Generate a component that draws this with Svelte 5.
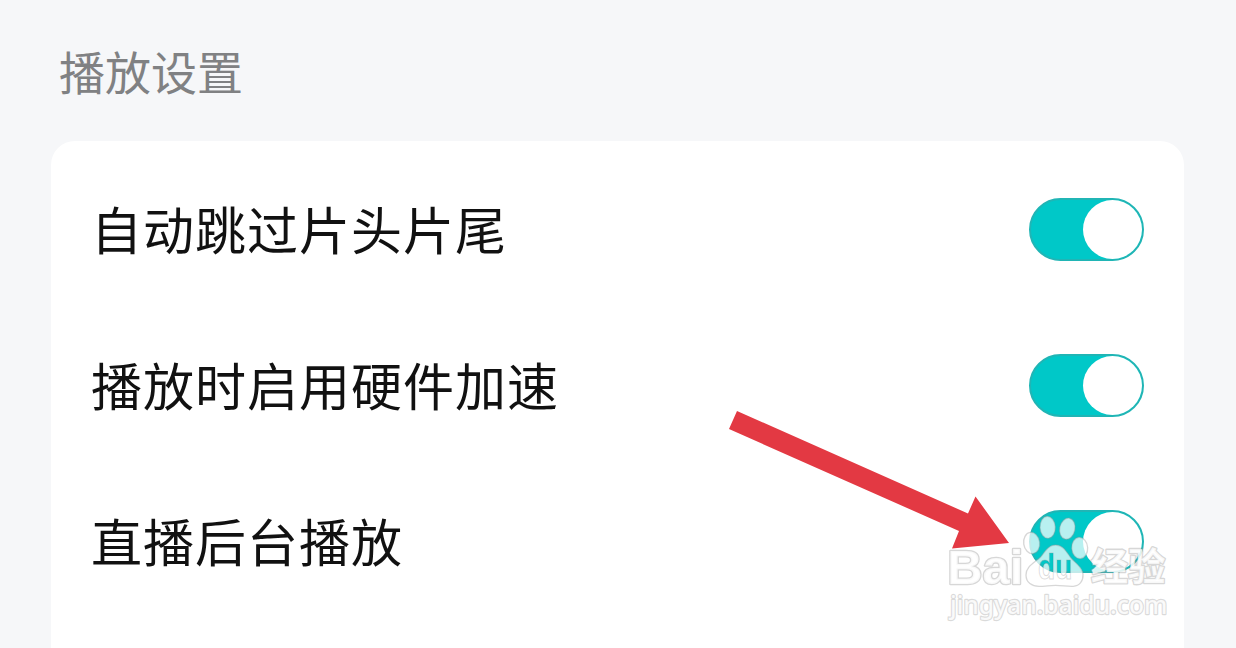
<script>
  let settings = $state([
    { id: "skip", label: "自动跳过片头片尾", on: true },
    { id: "hardware", label: "播放时启用硬件加速", on: true },
    { id: "background", label: "直播后台播放", on: true }
  ]);

  function toggle(setting) {
    setting.on = !setting.on;
  }
</script>

<main>
  <h2>播放设置</h2>
  <div class="card">
    {#each settings as setting (setting.id)}
      <div class="row">
        <span class="label">{setting.label}</span>
        <button
          class="switch"
          class:on={setting.on}
          role="switch"
          aria-checked={setting.on}
          aria-label={setting.label}
          onclick={() => toggle(setting)}
        >
          <span class="thumb"></span>
        </button>
      </div>
    {/each}
  </div>

  <svg class="arrow" viewBox="0 0 290 150" aria-hidden="true">
    <path d="M17 11 L248 113.5 L255.5 96.5 L289 143 L232 148.5 L239 131 L9 29 Z" />
  </svg>

  <svg class="watermark" viewBox="0 0 810 474">
    <defs>
      <mask id="cutout" maskUnits="userSpaceOnUse" x="0" y="0" width="810" height="474">
        <rect width="810" height="474" fill="#fff" />
        <text class="du" x="324" y="267" textLength="103" lengthAdjust="spacingAndGlyphs" fill="#000">du</text>
      </mask>
    </defs>
    <g class="mark">
      <text class="latin" x="52" y="281" textLength="228" lengthAdjust="spacingAndGlyphs">Bai</text>
      <ellipse cx="305" cy="159" rx="24" ry="32" transform="rotate(-8 305 159)" />
      <ellipse cx="353" cy="112" rx="23" ry="33" transform="rotate(-3 353 112)" />
      <ellipse cx="412" cy="116" rx="23" ry="32" transform="rotate(12 412 116)" />
      <ellipse cx="449" cy="174" rx="24" ry="32" transform="rotate(-4 449 174)" />
      <path
        mask="url(#cutout)"
        d="M377 165 C354 165 346 185 332 201 C313 219 288 229 288 255 C288 278 306 289 327 289 C347 289 358 286 377 286 C398 286 410 290 430 289 C449 288 460 273 459 253 C458 232 438 221 423 204 C410 187 400 165 377 165 Z"
      />
      <text class="han" x="482" y="271" textLength="224" lengthAdjust="spacingAndGlyphs">经验</text>
      <text class="url" x="60" y="371" textLength="652" lengthAdjust="spacingAndGlyphs">jingyan.baidu.com</text>
    </g>
    <text class="du outline" x="324" y="267" textLength="103" lengthAdjust="spacingAndGlyphs" aria-hidden="true">du</text>
  </svg>
</main>

<style>
  :global(body) {
    margin: 0;
    background: #f6f7f9;
  }

  main {
    position: relative;
    box-sizing: border-box;
    height: 648px;
    padding: 36px 52px 0 51px;
    overflow: hidden;
    background: #f6f7f9;
    font-family: "Noto Sans CJK SC", sans-serif;
  }

  h2 {
    margin: 0 0 37px 8px;
    color: #808183;
    font-size: 46px;
    font-weight: 400;
    line-height: 68px;
  }

  .card {
    height: 540px;
    padding: 10px 40px 0;
    border-radius: 24px;
    background: #fff;
  }

  .row {
    display: flex;
    align-items: center;
    justify-content: space-between;
    height: 156px;
  }

  .label {
    margin-bottom: 2px;
    color: #111;
    font-size: 51px;
    letter-spacing: 1px;
    line-height: 76px;
  }

  .switch {
    display: flex;
    box-sizing: border-box;
    width: 115px;
    height: 63px;
    padding: 0;
    border: 2px solid #c8cccc;
    border-radius: 32px;
    background: #c8cccc;
  }

  .switch.on {
    justify-content: flex-end;
    border-color: #20b5b5;
    background: #00c8c8;
  }

  .thumb {
    width: 59px;
    height: 59px;
    border-radius: 50%;
    background: #fff;
  }

  .arrow {
    position: absolute;
    top: 400px;
    left: 720px;
    width: 290px;
    height: 150px;
    fill: #e33943;
  }

  .watermark {
    position: absolute;
    top: 490px;
    left: 930px;
    width: 270px;
    height: 158px;
  }

  .mark {
    fill: rgba(255, 255, 255, 0.72);
    stroke: rgba(150, 150, 150, 0.38);
    stroke-width: 4px;
    stroke-linejoin: round;
  }

  .mark text {
    fill: rgba(255, 255, 255, 0.85);
    paint-order: stroke;
    stroke-width: 8px;
  }

  .latin {
    font: 700 144px "Liberation Sans", sans-serif;
  }

  .du {
    font: 700 103px "Liberation Sans", sans-serif;
  }

  .outline {
    fill: none;
    stroke: rgba(150, 150, 150, 0.35);
    stroke-width: 3px;
  }

  .han {
    font: 700 114px "Noto Sans CJK SC", sans-serif;
  }

  .mark .url {
    font: 500 76px "Noto Sans", sans-serif;
    stroke: rgba(150, 150, 150, 0.34);
    stroke-width: 7px;
  }
</style>
